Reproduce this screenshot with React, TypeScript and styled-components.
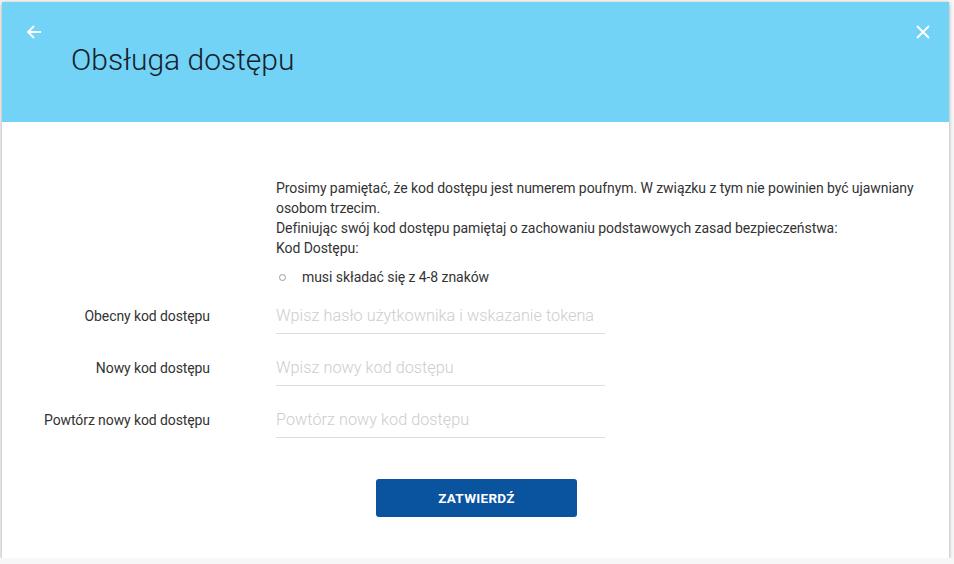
import styled, { createGlobalStyle } from "styled-components";

const GlobalStyle = createGlobalStyle`
    html, body {
        margin: 0;
        padding: 0;
        background: #f7f7f7;
        font-family: Roboto, "Noto Sans", sans-serif;
    }
    * { box-sizing: border-box; }
`;

const Card = styled.div`
    margin: 2px 0 0 2px;
    width: 947px;
    height: 556px;
    background: #fff;
    box-shadow: 0 1px 4px rgba(0, 0, 0, 0.35);
    display: flex;
    flex-direction: column;
`;

const Header = styled.div`
    height: 120px;
    background: #72d3f6;
    display: flex;
    align-items: flex-start;
    justify-content: space-between;
    padding: 20px 16px 0 22px;
`;

const HeaderLeft = styled.div`
    display: flex;
    flex-direction: column;
`;

const IconButton = styled.button`
    width: 20px;
    height: 20px;
    padding: 0;
    border: none;
    background: transparent;
    display: flex;
    align-items: center;
    justify-content: center;
    cursor: pointer;
`;

const Title = styled.h1`
    margin: 0;
    margin-left: 47px;
    font-size: 30px;
    font-weight: 300;
    color: #15202b;
`;

const Content = styled.div`
    padding: 56px 0 0 0;
    display: flex;
    flex-direction: column;
`;

const Info = styled.div`
    margin-left: 274px;
    width: 660px;
    font-size: 14px;
    line-height: 20px;
    color: #333;
    letter-spacing: -0.07px;
`;

const Rules = styled.ul`
    list-style: none;
    margin: 9px 0 0 0;
    padding: 0;
`;

const Rule = styled.li`
    display: flex;
    align-items: center;
    height: 20px;
    &::before {
        content: "";
        width: 5px;
        height: 5px;
        border: 1px solid #999;
        border-radius: 50%;
        margin: 0 16px 0 3px;
    }
`;

const Form = styled.form`
    margin-top: 11px;
    display: flex;
    flex-direction: column;
    gap: 16px;
`;

const Row = styled.div`
    display: grid;
    grid-template-columns: 208px 329px;
    column-gap: 66px;
    align-items: center;
    height: 36px;
`;

const Label = styled.label`
    text-align: right;
    font-size: 14px;
    color: #333;
    letter-spacing: -0.1px;
`;

const Field = styled.input`
    height: 36px;
    border: none;
    border-bottom: 1px solid #ddd;
    padding: 0;
    font-family: Roboto, "Noto Sans", sans-serif;
    font-size: 16.2px;
    font-weight: 300;
    letter-spacing: 0.05px;
    color: #333;
    outline: none;
    background: transparent;
    &::placeholder {
        color: #cdcdcd;
    }
`;

const Actions = styled.div`
    display: flex;
    margin-top: 41px;
    padding-left: 374px;
`;

const SubmitButton = styled.button`
    width: 201px;
    height: 38px;
    border: none;
    border-radius: 3px;
    background: #0a539f;
    color: #fff;
    font-family: Roboto, "Noto Sans", sans-serif;
    font-size: 13.5px;
    font-weight: 700;
    letter-spacing: 0.3px;
    cursor: pointer;
`;

const fields = [
    { label: "Obecny kod dostępu", placeholder: "Wpisz hasło użytkownika i wskazanie tokena" },
    { label: "Nowy kod dostępu", placeholder: "Wpisz nowy kod dostępu" },
    { label: "Powtórz nowy kod dostępu", placeholder: "Powtórz nowy kod dostępu" },
];

function App() {
    return (
        <>
            <GlobalStyle />
            <Card>
                <Header>
                    <HeaderLeft>
                        <IconButton aria-label="back">
                            <svg width="16" height="16" viewBox="0 0 16 16">
                                <path d="M15 8H2M8 2L2 8l6 6" fill="none" stroke="#fff" strokeWidth="1.8" />
                            </svg>
                        </IconButton>
                        <Title>Obsługa dostępu</Title>
                    </HeaderLeft>
                    <IconButton aria-label="close">
                        <svg width="14" height="14" viewBox="0 0 14 14">
                            <path d="M1 1l12 12M13 1L1 13" fill="none" stroke="#fff" strokeWidth="1.8" />
                        </svg>
                    </IconButton>
                </Header>
                <Content>
                    <Info>
                        Prosimy pamiętać, że kod dostępu jest numerem poufnym. W związku z tym nie powinien być ujawniany osobom trzecim.
                        <br />
                        Definiując swój kod dostępu pamiętaj o zachowaniu podstawowych zasad bezpieczeństwa:
                        <br />
                        Kod Dostępu:
                        <Rules>
                            <Rule>musi składać się z 4-8 znaków</Rule>
                        </Rules>
                    </Info>
                    <Form onSubmit={(e) => e.preventDefault()}>
                        {fields.map((f) => (
                            <Row key={f.label}>
                                <Label>{f.label}</Label>
                                <Field type="password" placeholder={f.placeholder} />
                            </Row>
                        ))}
                    </Form>
                    <Actions>
                        <SubmitButton type="button">ZATWIERDŹ</SubmitButton>
                    </Actions>
                </Content>
            </Card>
        </>
    );
}

export default App;
